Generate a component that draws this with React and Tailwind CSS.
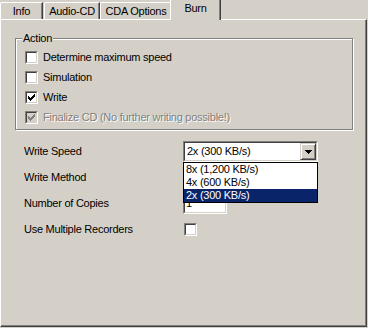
const font = { fontFamily: '"Liberation Sans", Arial, sans-serif' };

const CheckMark = ({ color }) => (
  <svg width="7" height="7" viewBox="0 0 7 7" shapeRendering="crispEdges" className="absolute left-[1px] top-[1px]">
    <g fill={color}>
      <rect x="6" y="0" width="1" height="3" />
      <rect x="5" y="1" width="1" height="3" />
      <rect x="4" y="2" width="1" height="3" />
      <rect x="3" y="3" width="1" height="3" />
      <rect x="2" y="4" width="1" height="3" />
      <rect x="1" y="3" width="1" height="3" />
      <rect x="0" y="2" width="1" height="3" />
    </g>
  </svg>
);

const Check = ({ checked, disabled }) => (
  <span className="relative block h-[13px] w-[13px] shrink-0 border border-t-[#808080] border-l-[#808080] border-b-white border-r-white">
    <span
      className={
        disabled
          ? "absolute inset-0 border border-t-[#404040] border-l-[#404040] border-b-[#d4d0c8] border-r-[#d4d0c8] bg-[#d4d0c8]"
          : "absolute inset-0 border border-t-[#404040] border-l-[#404040] border-b-[#d4d0c8] border-r-[#d4d0c8] bg-white"
      }
    >
      {checked && <CheckMark color={disabled ? "#808080" : "#000"} />}
    </span>
  </span>
);

const CheckRow = ({ label, checked, disabled }) => (
  <div className="flex h-[13px] items-center gap-[5px]">
    <Check checked={checked} disabled={disabled} />
    <span
      className={disabled ? "text-[#808080] [text-shadow:1px_1px_0_#fff]" : "text-black"}
    >
      {label}
    </span>
  </div>
);

const Tab = ({ label, w, active }) =>
  active ? (
    <div
      className={`relative z-10 -mx-[2px] -mb-px flex h-[21px] ${w} items-start justify-center rounded-tl-[2px] border-l border-t border-l-white border-t-white border-r border-r-[#404040] bg-[#d4d0c8] pt-[2px] shadow-[inset_-1px_0_0_#808080]`}
    >
      {label}
    </div>
  ) : (
    <div
      className={`flex h-[17px] ${w} items-start justify-center rounded-tl-[2px] border-l border-t border-l-white border-t-white border-r border-r-[#404040] bg-[#d4d0c8] pt-[2px] shadow-[inset_-1px_0_0_#808080]`}
    >
      {label}
    </div>
  );

export default function App() {
  const speeds = ["8x (1,200 KB/s)", "4x (600 KB/s)", "2x (300 KB/s)"];

  return (
    <div
      className="h-[328px] w-[368px] overflow-hidden bg-[#d4d0c8] text-[11px] leading-[13px] tracking-[-0.25px] text-black"
      style={font}
    >
      {/* Tabs */}
      <div className="flex h-[19px] items-end">
        <Tab label="Info" w="w-[43px]" />
        <div className="w-[1px]" />
        <Tab label="Audio-CD" w="w-[56px]" />
        <Tab label="CDA Options" w="w-[72px]" />
        <Tab label="Burn" w="w-[51px]" active />
      </div>

      {/* Page */}
      <div className="h-[308px] w-[367px] border-l border-t border-l-white border-t-white border-r border-b border-r-[#404040] border-b-[#404040] shadow-[inset_-1px_-1px_0_#808080] pl-[14px] pt-[18px]">
        {/* Action group */}
        <div className="relative h-[92px] w-[338px] border border-[#808080] pl-[9px] pt-[12px] shadow-[inset_1px_1px_0_#fff,1px_1px_0_#fff]">
          <span className="absolute -top-[7px] left-[6px] bg-[#d4d0c8] px-[1px]">Action</span>
          <div className="flex flex-col gap-[7px]">
            <CheckRow label="Determine maximum speed" />
            <CheckRow label="Simulation" />
            <CheckRow label="Write" checked />
            <CheckRow label="Finalize CD (No further writing possible!)" checked disabled />
          </div>
        </div>

        {/* Settings */}
        <div className="mt-[11px] flex flex-col gap-[5px] pl-[9px]">
          <div className="flex h-[21px] items-center">
            <span className="w-[159px]">Write Speed</span>
            <div className="relative z-20 h-[21px] w-[135px] border border-t-[#808080] border-l-[#808080] border-b-white border-r-white">
              <div className="flex h-full items-center border border-t-[#404040] border-l-[#404040] border-b-[#d4d0c8] border-r-[#d4d0c8] bg-white pl-[2px]">
                <span className="flex-1">2x (300 KB/s)</span>
                <div className="flex h-[17px] w-[16px] items-center justify-center border border-t-[#d4d0c8] border-l-[#d4d0c8] border-b-[#404040] border-r-[#404040] bg-[#d4d0c8] shadow-[inset_1px_1px_0_#fff,inset_-1px_-1px_0_#808080]">
                  <svg width="7" height="4" viewBox="0 0 7 4" shapeRendering="crispEdges">
                    <path d="M0 0h7v1H0zM1 1h5v1H1zM2 2h3v1H2zM3 3h1v1H3z" fill="#000" />
                  </svg>
                </div>
              </div>
              <div className="absolute left-[-1px] top-[20px] w-[135px] border border-black bg-white">
                {speeds.map((s, i) => (
                  <div
                    key={s}
                    className={
                      i === 2
                        ? "h-[13px] bg-[#0a246a] pl-[2px] text-white"
                        : "h-[13px] pl-[2px] text-black"
                    }
                  >
                    {s}
                  </div>
                ))}
              </div>
            </div>
          </div>

          <div className="flex h-[21px] items-center">
            <span className="w-[159px]">Write Method</span>
          </div>

          <div className="flex h-[21px] items-center">
            <span className="w-[159px]">Number of Copies</span>
            <div className="h-[20px] w-[44px] border border-t-[#808080] border-l-[#808080] border-b-white border-r-white">
              <div className="flex h-full items-center border border-t-[#404040] border-l-[#404040] border-b-[#d4d0c8] border-r-[#d4d0c8] bg-white pl-[1px]">
                1
              </div>
            </div>
          </div>

          <div className="flex h-[21px] items-center">
            <span className="w-[160px]">Use Multiple Recorders</span>
            <Check />
          </div>
        </div>
      </div>
    </div>
  );
}
